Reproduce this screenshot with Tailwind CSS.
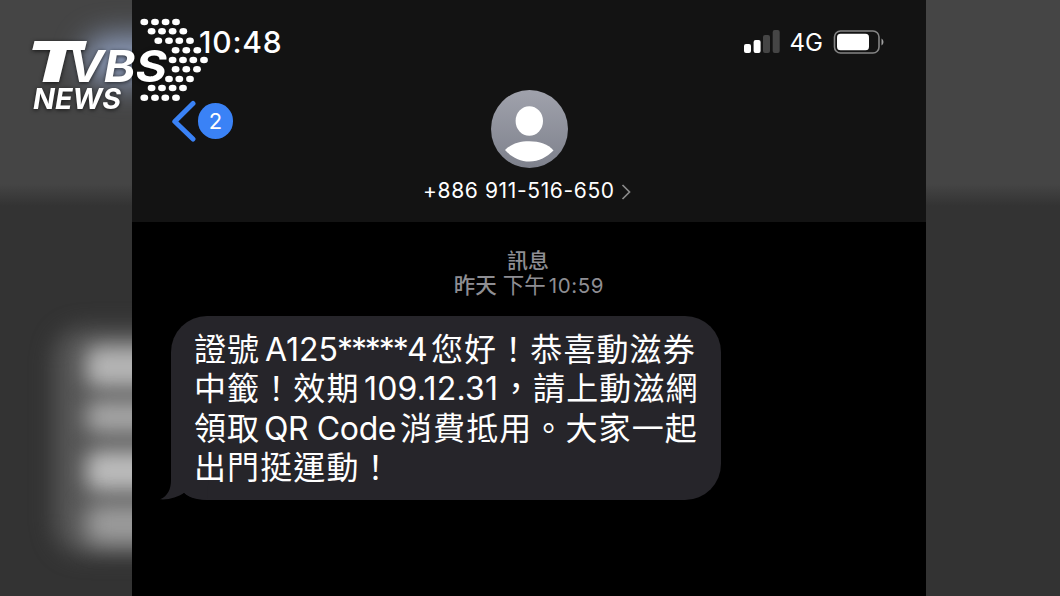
<!DOCTYPE html>
<html lang="zh-Hant">
<head>
  <meta charset="UTF-8">
  <title>TVBS NEWS</title>
  <meta name="viewport" content="width=device-width, initial-scale=1.0">
  <script src="https://cdn.jsdelivr.net/npm/@tailwindcss/browser@4"></script>
</head>
<body class="bg-[#333333] text-white font-['Inter','Noto_Sans_CJK_TC',sans-serif]">
  <div class="relative flex w-[1060px] h-[596px] overflow-hidden bg-linear-to-b from-[#454545] from-[184px] to-[#333333] to-[206px]">

    <!-- Blurred backdrop, left -->
    <aside class="relative w-[132px] shrink-0 overflow-hidden">
      <div class="absolute left-[84px] top-[36px] w-24 h-12 rounded-full bg-[#9fb2d8]/80 blur-[15px]"></div>
      <div class="absolute left-[54px] top-[328px] w-36 h-[226px] rounded-[30px] bg-[#575757] blur-[11px]"></div>
      <div class="absolute left-[86px] top-[346px] w-24 h-[42px] rounded-xl bg-[#b4b4b4] blur-[10px]"></div>
      <div class="absolute left-[86px] top-[400px] w-24 h-[34px] rounded-xl bg-[#a4a4a4] blur-[10px]"></div>
      <div class="absolute left-[86px] top-[450px] w-24 h-[42px] rounded-xl bg-[#bababa] blur-[10px]"></div>
      <div class="absolute left-[86px] top-[504px] w-24 h-[40px] rounded-xl bg-[#9c9c9c] blur-[11px]"></div>
    </aside>

    <!-- Phone -->
    <main class="w-[794px] shrink-0 flex flex-col bg-black">
      <header class="h-[222px] bg-[#131313]">
        <div class="flex items-center justify-between h-[84px] pl-[67px] pr-[42px]">
          <span class="text-[30px] leading-none font-medium tracking-[0.8px]">10:48</span>
          <div class="flex items-center">
            <svg class="w-9 h-6" viewBox="0 0 36 24">
              <rect x="0" y="14" width="7" height="9" rx="2" fill="#fff"/>
              <rect x="9.6" y="10" width="7" height="13" rx="2" fill="#fff"/>
              <rect x="19" y="5" width="7" height="18" rx="2" fill="#454545"/>
              <rect x="28.7" y="0" width="7" height="23" rx="2" fill="#454545"/>
            </svg>
            <span class="ml-[10px] mt-[2px] text-[24px] leading-none">4G</span>
            <svg class="ml-[10px] w-[51px] h-6" viewBox="0 0 51 24">
              <rect x="1.5" y="1" width="44.5" height="22" rx="6" fill="none" stroke="#858585" stroke-width="1.6"/>
              <rect x="4" y="3.7" width="32" height="16.6" rx="3.5" fill="#fff"/>
              <path d="M48.5 8.5c2.6 1.4 2.6 5.6 0 7z" fill="#a0a0a0"/>
            </svg>
          </div>
        </div>
        <div class="flex items-start">
          <div class="flex items-center w-[359px] pl-[40px] pt-[15px]">
            <svg class="w-[24px] h-[44px]" viewBox="0 0 24 44">
              <path d="M21 4.5 2.8 22.5 21 40" fill="none" stroke="#3a82f6" stroke-width="5" stroke-linecap="round" stroke-linejoin="round"/>
            </svg>
            <span class="ml-[2px] flex items-center justify-center w-[35px] h-[36px] rounded-full bg-[#3a82f6] text-[22px] leading-none">2</span>
          </div>
          <svg class="w-[77px] h-[78px] mt-[6px]" viewBox="0 0 77 78">
            <defs>
              <linearGradient id="avatar" x1="0" y1="0" x2="0" y2="1">
                <stop offset="0" stop-color="#a0a2ac"/>
                <stop offset="1" stop-color="#7e818c"/>
              </linearGradient>
            </defs>
            <ellipse cx="38.5" cy="39" rx="38.5" ry="39" fill="url(#avatar)"/>
            <ellipse cx="38.3" cy="31" rx="13.7" ry="14.7" fill="#fff"/>
            <path d="M14 60C20 54 28 51.3 38.3 51.3S57 54 62.5 60.5C56 67 48 71.5 38.3 71.5S20.500 67 14 60z" fill="#fff"/>
          </svg>
        </div>
        <div class="flex items-center h-7 mt-[8px] pl-[291px]">
          <span class="text-[21px] leading-none tracking-[0.63px] whitespace-nowrap">+886 911-516-650</span>
          <svg class="ml-[6px] mt-[3px] w-[10px] h-[16px]" viewBox="0 0 10 16">
            <path d="M1.5 1 8.5 8 1.5 15" fill="none" stroke="#8a8a8a" stroke-width="1.7"/>
          </svg>
        </div>
      </header>

      <section class="flex-1">
        <div class="pt-[26px] text-center text-[#8e8e93] text-[20.5px] leading-[25px]">
          <div class="font-medium text-[21px] pr-[2px]">訊息</div>
          <div class="flex justify-center">
            <span class="font-medium text-[21.5px]">昨天</span>
            <span class="ml-[6px] text-[21.5px]">下午</span>
            <span class="ml-[3px] tracking-[0.6px]">10:59</span>
          </div>
        </div>

        <!-- Message bubble -->
        <div class="relative mt-[18px] ml-[39px] w-[550px] h-[184px] rounded-[36px] bg-[#26252a] pt-[14px] pl-[23px] text-[32px] leading-[39.3px] tracking-[1.1px] whitespace-nowrap">
          <svg class="absolute left-[-11px] bottom-0 w-[50px] h-[44px]" viewBox="0 0 50 44">
            <path d="M11 0V24C11 33 8 40 0 43.3 9 44 18 41 24 37 28 41 36 44 47 44L50 0z" fill="#26252a"/>
            <path d="M14 44C18 42.5 22 40 24 37 28 41 34 44 42 44z" fill="#000"/>
          </svg>
          <div class="relative flex"><span class="w-[71px]">證號</span><span class="w-[72px] tracking-normal">A125</span><span class="w-[70px] tracking-[-2.1px]">*****</span><span class="w-[24px] tracking-normal">4</span><span>您好！恭喜動滋券</span></div>
          <div class="relative flex"><span class="w-[170px]">中籤！效期</span><span class="w-[136px] tracking-[0.2px]">109.12.31</span><span>，請上動滋網</span></div>
          <div class="relative flex"><span class="w-[70px]">領取</span><span class="w-[136px] tracking-[-0.4px]">QR Code</span><span>消費抵用。大家一起</span></div>
          <div class="relative">出門挺運動！</div>
        </div>
      </section>
    </main>

    <!-- Station logo -->
    <svg class="absolute left-0 top-0 w-[240px] h-[120px]" viewBox="0 0 240 120" fill="#fff">
      <g class="drop-shadow-[0_1px_2px_rgba(0,0,0,0.7)]" font-family="Inter, sans-serif" font-style="italic">
        <text x="26" y="82" font-size="57" font-weight="900" textLength="57" lengthAdjust="spacingAndGlyphs">T</text>
        <text x="68" y="82" font-size="44" font-weight="700" textLength="99" lengthAdjust="spacingAndGlyphs">VBS</text>
        <text x="33" y="109" font-size="28.5" font-weight="700" textLength="88" lengthAdjust="spacingAndGlyphs">NEWS</text>
      </g>
      <g id="dots"></g>
    </svg>
  </div>

  <script>
    const rows = [
      [22, [144.3, 155, 165.6, 176]],
      [31.3, [151.6, 162, 172.6, 183.3]],
      [40.7, [158.3, 169, 179.3, 190]],
      [50.3, [175.6, 186.3, 197.3]],
      [60, [172.6, 183, 193.3, 204]],
      [69.3, [175.6, 186.3, 197]],
      [79, [169, 179.3, 190]],
      [88, [151.6, 162, 172.6, 183]],
      [97.7, [144.3, 155, 165.3, 176]]
    ];
    document.getElementById('dots').innerHTML = rows.map(([y, xs]) =>
      xs.map(x => `<ellipse cx="${x}" cy="${y}" rx="3.9" ry="3.3"/>`).join('')
    ).join('');
  </script>
</body>
</html>
